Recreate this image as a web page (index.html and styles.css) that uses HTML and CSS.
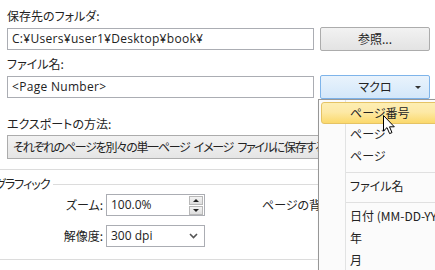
FILE: index.html
```html
<!DOCTYPE html>
<html lang="ja">

<head>
    <meta charset="UTF-8">
    <title>書き出し</title>
    <link rel="stylesheet" href="styles.css">
</head>

<body>
    <div class="dialog">
        <div class="label">保存先のフォルダ:</div>
        <div class="row">
            <div class="textbox">C:¥Users¥user1¥Desktop¥book¥</div>
            <div class="button">参照...</div>
        </div>

        <div class="label">ファイル名:</div>
        <div class="row row-name">
            <div class="textbox">&lt;Page Number&gt;</div>
            <div class="button button-macro">マクロ<span class="drop-arrow"></span></div>
        </div>

        <div class="label">エクスポートの方法:</div>
        <div class="select-wide">それぞれのページを別々の単一ページ イメージ ファイルに保存する</div>

        <div class="divider"></div>

        <div class="group-title">
            <span>グラフィック</span>
            <span class="group-line"></span>
        </div>

        <div class="group">
            <div class="field-label">ズーム:</div>
            <div class="spin">
                <span class="spin-value">100.0%</span>
                <span class="spin-buttons">
                    <span class="spin-btn"><span class="tri-up"></span></span>
                    <span class="spin-btn"><span class="tri-down"></span></span>
                </span>
            </div>
            <div class="side-label">ページの背景色:</div>

            <div class="field-label">解像度:</div>
            <div class="combo">
                <span>300 dpi</span>
                <svg class="chevron" width="9" height="6" viewBox="0 0 9 6">
                    <path d="M1 1 L4.5 4.5 L8 1" fill="none" stroke="#555" stroke-width="1.6"/>
                </svg>
            </div>
        </div>

        <div class="divider divider-bottom"></div>
    </div>

    <!-- macro drop-down menu -->
    <div class="menu">
        <div class="menu-item active">ページ番号</div>
        <div class="menu-item">ページ</div>
        <div class="menu-item">ページ</div>
        <div class="menu-sep"></div>
        <div class="menu-item">ファイル名</div>
        <div class="menu-sep"></div>
        <div class="menu-item">日付 (MM-DD-YYYY)</div>
        <div class="menu-item">年</div>
        <div class="menu-item">月</div>
    </div>

    <svg class="cursor" width="13" height="20" viewBox="0 0 13 20">
        <path d="M0.5 0.5 L0.5 16 L4 12.6 L6.6 18.6 L9 17.6 L6.5 11.8 L11.3 11.8 Z" fill="#fff" stroke="#000" stroke-width="1"/>
    </svg>
</body>

</html>
```

FILE: styles.css
```css
/* Reset */
* {
    margin: 0;
    padding: 0;
    box-sizing: border-box;
}

body {
    width: 435px;
    height: 270px;
    overflow: hidden;
    background: #ffffff;
    font-family: "Noto Sans CJK JP", "Noto Sans", sans-serif;
    font-feature-settings: "palt" 1;
    font-size: 12px;
    line-height: 16px;
    color: #222222;
    position: relative;
}

/* Dialog body */
.dialog {
    padding: 8px 5px 0 7px;
}

.label {
    height: 16px;
    margin-bottom: 3px;
}

.row {
    display: flex;
    align-items: center;
    gap: 6px;
    height: 24px;
    margin-bottom: 5px;
}

.row-name {
    margin-top: 2px;
    margin-bottom: 17px;
}

.textbox {
    flex: 1;
    height: 22px;
    border: 1px solid #abadb3;
    padding: 2px 4px;
    line-height: 16px;
    white-space: nowrap;
    overflow: hidden;
    font-family: "Open Sans", "Noto Sans CJK JP", sans-serif;
    letter-spacing: 0.3px;
}

.button {
    width: 110px;
    height: 24px;
    border: 1px solid #acacac;
    border-radius: 2px;
    background: linear-gradient(#f2f2f2, #e3e3e3);
    text-align: center;
    line-height: 21px;
    position: relative;
}

.button-macro {
    background: linear-gradient(#e9f3fc, #d3e7fa);
    border-color: #7eb4ea;
}

.drop-arrow {
    position: absolute;
    right: 8px;
    top: 10px;
    border-left: 3px solid transparent;
    border-right: 3px solid transparent;
    border-top: 3px solid #333;
}

.select-wide {
    width: 430px;
    height: 24px;
    border: 1px solid #acacac;
    background: linear-gradient(#f2f2f2, #e5e5e5);
    padding: 3px 5px;
    line-height: 16px;
    white-space: nowrap;
    overflow: hidden;
    letter-spacing: -1.3px;
    word-spacing: 3px;
}

.divider {
    height: 1px;
    background: #dcdcdc;
    margin: 10px -5px 7px -7px;
}

/* Group box */
.group-title {
    display: flex;
    align-items: center;
    gap: 3px;
    margin-left: -12px;
    height: 14px;
    letter-spacing: -1px;
}

.group-line {
    flex: 1;
    height: 1px;
    background: #dcdcdc;
}

.group {
    display: grid;
    grid-template-columns: 99px 99px 1fr;
    grid-template-rows: 22px 22px;
    row-gap: 9px;
    align-items: center;
    margin-top: 3px;
}

.field-label {
    text-align: right;
    padding-right: 3px;
}

.spin,
.combo {
    height: 22px;
    border: 1px solid #abadb3;
    display: flex;
    align-items: center;
    justify-content: space-between;
    padding-left: 4px;
    font-family: "Open Sans", "Noto Sans CJK JP", sans-serif;
}

.spin-buttons {
    display: flex;
    flex-direction: column;
    gap: 1px;
    margin-right: 1px;
}

.spin-btn {
    width: 14px;
    height: 9px;
    background: linear-gradient(#f3f3f3, #dedede);
    border: 1px solid #b8b8b8;
    display: flex;
    align-items: center;
    justify-content: center;
}

.tri-up {
    border-left: 3px solid transparent;
    border-right: 3px solid transparent;
    border-bottom: 3px solid #222;
}

.tri-down {
    border-left: 3px solid transparent;
    border-right: 3px solid transparent;
    border-top: 3px solid #222;
}

.chevron {
    margin-right: 6px;
}

.side-label {
    padding-left: 57px;
    white-space: nowrap;
    overflow: hidden;
}

.divider-bottom {
    margin-top: 12px;
}

/* Drop-down menu */
.menu {
    position: absolute;
    left: 318px;
    top: 99px;
    width: 140px;
    height: 190px;
    background: #fbfbfb;
    border: 1px solid #979797;
    box-shadow: 2px 2px 3px rgba(0, 0, 0, 0.25);
    padding: 2px 0 0 2px;
}

.menu::before {
    content: "";
    position: absolute;
    left: 26px;
    top: 0;
    bottom: 0;
    width: 1px;
    background: #e2e3e3;
}

.menu-item {
    height: 22px;
    line-height: 20px;
    padding-left: 29px;
    white-space: nowrap;
    position: relative;
}

.menu-item.active {
    border: 1px solid #e5c365;
    border-radius: 3px;
    padding-left: 28px;
    background: linear-gradient(#fdeeb3, #fde9a6 45%, #fbd96c);
}

.menu-sep {
    height: 5px;
    margin-left: 25px;
    padding-top: 4px;
    border-bottom: 1px solid #e0e0e0;
    margin-bottom: 3px;
}

.cursor {
    position: absolute;
    left: 383px;
    top: 115px;
}
```
